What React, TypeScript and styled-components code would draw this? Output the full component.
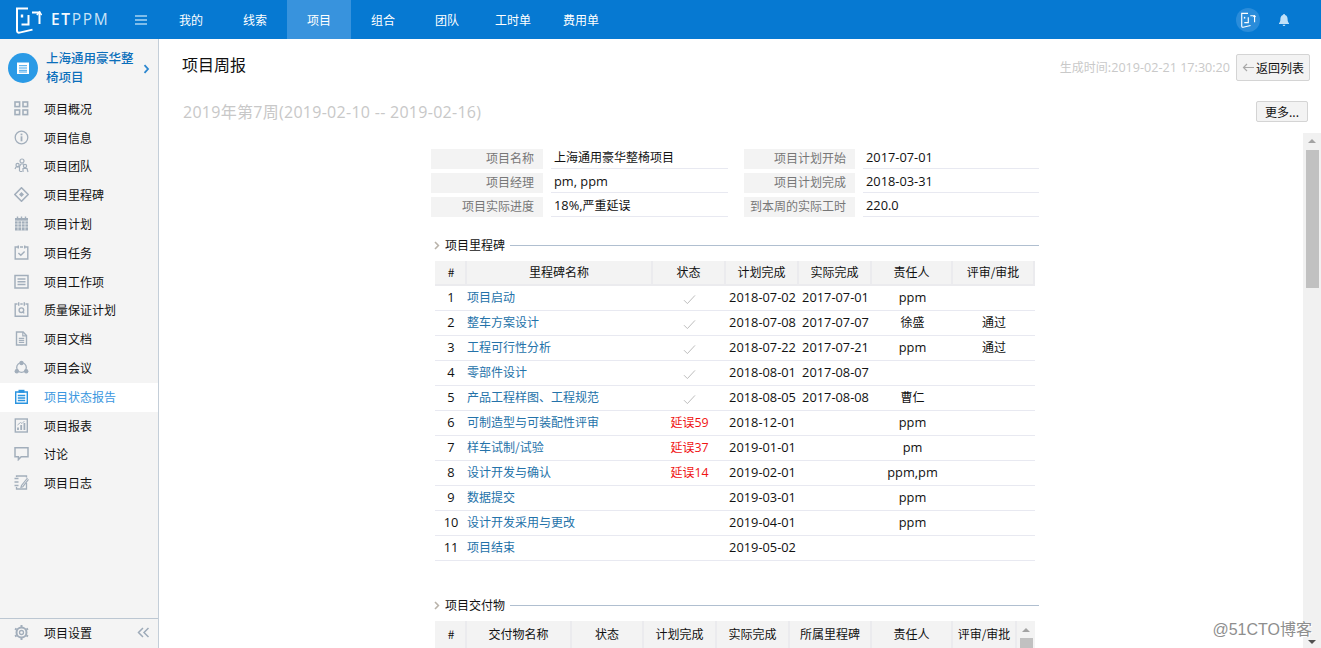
import React from "react";
import styled, { createGlobalStyle } from "styled-components";

const CJK = `"Noto Sans CJK SC", "Open Sans", sans-serif`;
const LATIN = `"Open Sans", "Noto Sans CJK SC", sans-serif`;

const Global = createGlobalStyle`
  html, body { margin: 0; padding: 0; height: 100%; overflow: hidden; background: #fff; }
  body { font-family: ${CJK}; font-size: 12px; color: #111; }
  #root { height: 100%; }
  * { box-sizing: border-box; }
`;

const Page = styled.div`
  position: relative;
  display: flex;
  flex-direction: column;
  height: 648px;
  width: 1321px;
  overflow: hidden;
`;
const TopBar = styled.header`
  display: flex;
  align-items: stretch;
  height: 39px;
  flex: none;
  background: #0679d2;
  color: #fff;
`;
const Brand = styled.div`
  display: flex;
  align-items: center;
  width: 159px;
  padding-left: 14px;
  flex: none;
`;
const BrandName = styled.span`
  margin-left: 9px;
  font: 400 15.5px/1 ${LATIN};
  letter-spacing: 1.7px;
  color: #c9e3f7;
  b { font-weight: 600; color: #f2f9fe; }
`;
const Burger = styled.span`
  margin-left: 25px;
  display: flex;
  flex-direction: column;
  gap: 2px;
  i { display: block; width: 12px; height: 2px; background: #7fbdea; }
`;
const Tab = styled.a<{ $active?: boolean }>`
  display: flex;
  align-items: center;
  justify-content: center;
  min-width: 64px;
  padding: 0 16px;
  font-size: 12px;
  color: #fff;
  background: ${(p) => (p.$active ? "#3893dd" : "transparent")};
`;
const TopRight = styled.div`
  margin-left: auto;
  display: flex;
  align-items: center;
  gap: 19px;
  padding-right: 32px;
`;
const Avatar = styled.span`
  width: 24px;
  height: 24px;
  border-radius: 50%;
  background: #2a8cda;
  display: flex;
  align-items: center;
  justify-content: center;
`;
const Body = styled.div`
  display: flex;
  flex: 1;
  min-height: 0;
`;
const Side = styled.aside`
  width: 159px;
  flex: none;
  background: #f4f4f4;
  border-right: 1px solid #c4ced8;
  display: flex;
  flex-direction: column;
`;
const ProjectHead = styled.div`
  display: flex;
  align-items: center;
  height: 55px;
  padding: 3px 0 0 8px;
`;
const ProjectDot = styled.span`
  width: 30px;
  height: 30px;
  flex: none;
  border-radius: 50%;
  background: #2a9ae6;
  display: flex;
  align-items: center;
  justify-content: center;
`;
const ProjectName = styled.div`
  width: 88px;
  margin: -2px 9px 0 8px;
  font-size: 12.5px;
  line-height: 19px;
  font-weight: 500;
  color: #0b6fbb;
`;
const ProjectChevron = styled.svg`
  margin-top: 2px;
`;
const SideList = styled.nav`
  display: flex;
  flex-direction: column;
  margin-top: 1px;
`;
const SideItem = styled.a<{ $active?: boolean }>`
  display: flex;
  align-items: center;
  height: 28.8px;
  padding: 0 0 2px 14px;
  gap: 15px;
  color: ${(p) => (p.$active ? "#3a97e0" : "#111")};
  background: ${(p) => (p.$active ? "#fff" : "transparent")};
  svg { flex: none; }
`;
const SideFoot = styled.div`
  margin-top: auto;
  height: 30px;
  border-top: 1px solid #bcc7d2;
  display: flex;
  align-items: center;
  padding: 0 0 2px 14px;
  gap: 15px;
  span { flex: 1; }
  svg:last-child { margin-right: 8px; }
`;
const Main = styled.main`
  flex: 1;
  min-width: 0;
  display: flex;
  flex-direction: column;
`;
const HeadRow = styled.div`
  display: flex;
  align-items: flex-start;
  height: 56px;
  flex: none;
  padding: 15px 11px 0 23px;
`;
const Title = styled.h1`
  margin: -1px 0 0;
  font-size: 16px;
  line-height: 22px;
  font-weight: 400;
  flex: 1;
`;
const Generated = styled.span`
  margin: 4px 6px 0 0;
  font-size: 12px;
  color: #c9c9c9;
  span { font-family: ${LATIN}; font-size: 12.6px; }
`;
const Btn = styled.button`
  display: inline-flex;
  align-items: center;
  justify-content: center;
  border: 1px solid #d4d4d4;
  border-radius: 2px;
  background: #f3f3f3;
  color: #111;
  font: 12px ${CJK};
  padding: 0;
`;
const BackBtn = styled(Btn)`
  width: 74px;
  height: 27px;
  gap: 1px;
`;
const MoreBtn = styled(Btn)`
  width: 52px;
  height: 21px;
`;
const WeekRow = styled.div`
  display: flex;
  align-items: flex-start;
  justify-content: space-between;
  height: 38px;
  flex: none;
  padding: 6px 13px 0 24px;
`;
const Week = styled.div`
  font: 16px/22px "Open Sans", ${CJK};
  letter-spacing: 0.28px;
  color: #c8c8c8;
`;
const Panel = styled.div`
  flex: 1;
  min-height: 0;
  display: flex;
`;
const Scroll = styled.div`
  flex: 1;
  min-width: 0;
  overflow: hidden;
  padding: 16px 0 0 272px;
`;
const Bar = styled.div<{ $w: number; $bg: string }>`
  width: ${(p) => p.$w}px;
  flex: none;
  background: ${(p) => p.$bg};
  display: flex;
  flex-direction: column;
  align-items: center;
  position: relative;
`;
const Arrow = styled.i<{ $h: number }>`
  display: block;
  flex: none;
  width: 0;
  height: 0;
  margin-top: ${(p) => p.$h}px;
  border: 4px solid transparent;
  border-top: 0;
  border-bottom: 4px solid #a3a3a3;
`;
const Thumb = styled.div<{ $top: number; $h: number }>`
  width: 13px;
  height: ${(p) => p.$h}px;
  margin-top: ${(p) => p.$top}px;
  background: #c1c1c1;
  flex: none;
`;
const ArrowDown = styled.i`
  position: absolute;
  bottom: 4px;
  width: 0;
  height: 0;
  border: 4px solid transparent;
  border-bottom: 0;
  border-top: 4px solid #505050;
`;
const Content = styled.div`
  width: 608px;
`;
const InfoGrid = styled.div`
  display: grid;
  grid-template-columns: 112px 185px 313px;
  width: 608px;
  row-gap: 4px;
`;
const InfoRow = styled.div`
  display: contents;
`;
const Label = styled.div<{ $w?: number }>`
  height: 20px;
  background: #f3f3f3;
  width: ${(p) => p.$w ?? 112}px;
  color: #777;
  text-align: right;
  padding-right: 9px;
  line-height: 18px;
`;
const Value = styled.div<{ $w: number }>`
  height: 20px;
  width: ${(p) => p.$w}px;
  margin-left: 8px;
  padding-left: 3px;
  border-bottom: 1px solid #e8e9f1;
  line-height: 15px;
  color: #111;
  white-space: nowrap;
`;
const Pair = styled.div`
  display: flex;
  margin-left: 16px;
`;
const Num = styled.span`
  font-family: ${LATIN};
  font-size: 12.8px;
`;
const SectionHead = styled.div<{ $mt: number }>`
  display: flex;
  align-items: center;
  margin-top: ${(p) => p.$mt}px;
  height: 16px;
  padding-left: 3px;
  svg { flex: none; }
`;
const SectionName = styled.span`
  margin: 0 5px 0 5px;
  padding-bottom: 2px;
  white-space: nowrap;
`;
const SectionLine = styled.i`
  flex: 1;
  height: 1px;
  background: #b0bfd0;
`;
const TableWrap = styled.div`
  margin: 8px 0 0 4px;
  display: flex;
  align-items: stretch;
  width: 600px;
`;
const Grid = styled.table<{ $w: number }>`
  table-layout: fixed;
  border-collapse: separate;
  border-spacing: 0;
  width: ${(p) => p.$w}px;
  flex: none;
`;
const Th = styled.th`
  height: 25px;
  padding: 0 0 2px;
  font-weight: 400;
  font-size: 12px;
  background: #f3f3f3;
  border-right: 2px solid #ebebee;
  border-bottom: 2px solid #ebebee;
  text-align: center;
  color: #111;
  &:first-child { padding-left: 2px; }
`;
const Td = styled.td<{ $left?: boolean; $latin?: boolean }>`
  height: 25px;
  padding: 0 0 ${(p) => (p.$latin ? 3 : 4)}px;
  border-bottom: 1px solid #e8e9f1;
  white-space: nowrap;
  text-align: ${(p) => (p.$left ? "left" : "center")};
  font-family: ${(p) => (p.$latin ? LATIN : CJK)};
  font-size: ${(p) => (p.$latin ? "12.8px" : "12px")};
  color: #111;
`;
const NameLink = styled.a`
  color: #2472a9;
`;
const Late = styled.span`
  display: inline-block;
  margin-top: 2px;
  color: #f01414;
  span { font-family: ${LATIN}; font-size: 12.4px; }
`;
const CheckMark = styled.svg`
  vertical-align: middle;
  margin-top: 4px;
`;
const Watermark = styled.div`
  position: absolute;
  right: 9px;
  bottom: 8px;
  font: 16px/20px "Liberation Sans", ${CJK};
  color: #8e8e8e;
  text-shadow: 0 0 1px #fff, 1px 1px 0 #fff;
`;

type IconProps = { c?: string };
const S = ({ children, w = 15 }: { children: React.ReactNode; w?: number }) => (
  <svg width={w} height={w} viewBox="0 0 15 15" fill="none">{children}</svg>
);
const G = "#a2aebb";

const icons: Record<string, (p: IconProps) => React.ReactElement> = {
  overview: ({ c = G }) => (
    <S><g stroke={c} strokeWidth="1.6"><rect x="1" y="1" width="4.6" height="4.6" /><rect x="9" y="1" width="4.6" height="4.6" /><rect x="1" y="9" width="4.6" height="4.6" /><rect x="9" y="9" width="4.6" height="4.6" /></g></S>
  ),
  info: ({ c = G }) => (
    <S><circle cx="7.5" cy="7.5" r="6.3" stroke={c} strokeWidth="1.3" /><rect x="6.6" y="6.3" width="1.8" height="5" fill={c} /><rect x="6.6" y="3.6" width="1.8" height="1.7" fill={c} /></S>
  ),
  team: ({ c = G }) => (
    <S><g stroke={c} strokeWidth="1.2"><circle cx="8" cy="3" r="2" /><circle cx="3.6" cy="7" r="1.6" /><circle cx="11" cy="8" r="1.6" /><path d="M5.5 13V8.5L7 6h2.5l.8 1M1 11l1-2h3M9 14v-3.5h4l1 3.5M5.5 13.5H8" /></g></S>
  ),
  milestone: ({ c = G }) => (
    <S><path d="M7.5.8 14.2 7.5 7.5 14.2.8 7.5Z" stroke={c} strokeWidth="1.6" /><path d="M7.5 5 10 7.5 7.5 10 5 7.5Z" fill={c} /></S>
  ),
  plan: ({ c = G }) => (
    <S><path d="M1 2h13v12.5H1Z" fill={c} /><path d="M3.5.5v3M7.5.5v3M11.5.5v3" stroke={c} strokeWidth="1.4" /><path d="M1 5h13M4 5v9.5M7.5 5v9.5M11 5v9.5M1 8h13M1 11h13" stroke="#f4f4f4" strokeWidth=".7" /></S>
  ),
  task: ({ c = G }) => (
    <S><path d="M4 2H1.2v12h12.6V2H11M6 2h3" stroke={c} strokeWidth="1.4" /><path d="M4.3.5v3M10.7.5v3" stroke={c} strokeWidth="1.4" /><path d="m4.4 8 2.4 2.3 3.800-3.800" stroke={c} strokeWidth="1.4" /></S>
  ),
  work: ({ c = G }) => (
    <S><rect x="1" y="1.5" width="13" height="12.5" stroke={c} strokeWidth="1.5" /><path d="M3.5 5h8M3.5 7.700h8M3.5 10.5h8" stroke={c} strokeWidth="1.4" /></S>
  ),
  quality: ({ c = G }) => (
    <S><path d="M3.5 2H1.2v12.3h12.6V2h-2.3M6.3 2h2.4" stroke={c} strokeWidth="1.4" /><path d="M4.700.3v3.400M10.300.3v3.400" stroke={c} strokeWidth="1.4" /><circle cx="7.4" cy="8.2" r="2.3" stroke={c} strokeWidth="1.4" /><path d="m8.600 9.600 1.600 1.800" stroke={c} strokeWidth="1.4" /></S>
  ),
  doc: ({ c = G }) => (
    <S><path d="M2.5 1h6.600L12.500 4.500V14h-10Z" stroke={c} strokeWidth="1.4" /><path d="M8.800 1v3.800h3.700M4.800 7.300h5.400M4.800 9.300h5.400M4.800 11.300h5.400" stroke={c} strokeWidth="1.2" /></S>
  ),
  meeting: ({ c = G }) => (
    <S><circle cx="7.5" cy="7.5" r="4.8" stroke={c} strokeWidth="1.3" /><circle cx="7.5" cy="3" r="2.2" fill={c} /><circle cx="2.8" cy="11.3" r="2.2" fill={c} /><circle cx="12.2" cy="11.3" r="2.2" fill={c} /></S>
  ),
  status: ({ c = "#2a94e0" }) => (
    <S><path d="M1.700 3h11.600v11.300H1.700Z" stroke={c} strokeWidth="1.4" fill="#fff" /><rect x="4.500" y=".8" width="6" height="3" fill={c} /><path d="M3.800 6.500h7.400M3.800 9h7.400M3.800 11.500h7.400" stroke={c} strokeWidth="1.3" /></S>
  ),
  report: ({ c = G }) => (
    <S><rect x="1.300" y="1" width="12" height="13" stroke={c} strokeWidth="1.4" /><path d="M4 12V9.500M7.200 12V7M10.400 12V5" stroke={c} strokeWidth="1.800" /><path d="m3.500 7 3-2.500 1.500 1 2.500-2.500" stroke={c} strokeWidth=".9" /></S>
  ),
  talk: ({ c = G }) => (
    <S><path d="M1 1.800h13v9H7.200l-2.800 2.800v-2.800H1Z" stroke={c} strokeWidth="1.5" /></S>
  ),
  log: ({ c = G }) => (
    <S><path d="M.5 3.500h4M.5 7h4M.5 10.500h4" stroke={c} strokeWidth="1.300" /><path d="M2.500 2V1h10v1.500M2.500 12v2h10V8" stroke={c} strokeWidth="1.300" /><path d="M13.500 3 7.500 10.500l-.5 1.800 1.800-.6L14.500 4.300" stroke={c} strokeWidth="1.200" /></S>
  ),
};

const Logo = ({ size = 28, color = "#fff" }: { size?: number; color?: string }) => (
  <svg width={size} height={size} viewBox="0 0 28 28" fill="none" stroke={color} strokeWidth="2">
    <path d="M14 2.500H3V24.500c0 1.600.9 2.400 2.500 2.100l13-3" />
    <path d="M18 6.500h7.500V18" />
    <path d="M22.800 9 25.500 6l2.200 3" strokeWidth="1.500" />
    <path d="M8 8.500v3" strokeWidth="2.400" />
    <path d="M14.500 9V18.500H7.500" />
  </svg>
);

const tabs = ["我的", "线索", "项目", "组合", "团队", "工时单", "费用单"];
const sideItems: [string, string][] = [
  ["overview", "项目概况"], ["info", "项目信息"], ["team", "项目团队"], ["milestone", "项目里程碑"],
  ["plan", "项目计划"], ["task", "项目任务"], ["work", "项目工作项"], ["quality", "质量保证计划"],
  ["doc", "项目文档"], ["meeting", "项目会议"], ["status", "项目状态报告"], ["report", "项目报表"],
  ["talk", "讨论"], ["log", "项目日志"],
];

type Row = [string, "ok" | number | "", string, string, string, string];
const rows: Row[] = [
  ["项目启动", "ok", "2018-07-02", "2017-07-01", "ppm", ""],
  ["整车方案设计", "ok", "2018-07-08", "2017-07-07", "徐盛", "通过"],
  ["工程可行性分析", "ok", "2018-07-22", "2017-07-21", "ppm", "通过"],
  ["零部件设计", "ok", "2018-08-01", "2017-08-07", "", ""],
  ["产品工程样图、工程规范", "ok", "2018-08-05", "2017-08-08", "曹仁", ""],
  ["可制造型与可装配性评审", 59, "2018-12-01", "", "ppm", ""],
  ["样车试制/试验", 37, "2019-01-01", "", "pm", ""],
  ["设计开发与确认", 14, "2019-02-01", "", "ppm,pm", ""],
  ["数据提交", "", "2019-03-01", "", "ppm", ""],
  ["设计开发采用与更改", "", "2019-04-01", "", "ppm", ""],
  ["项目结束", "", "2019-05-02", "", "", ""],
];

const Check = () => (
  <CheckMark width="13" height="11" viewBox="0 0 13 11" fill="none">
    <path d="M1 6.200 4.400 9.600 12 1.400" stroke="#bdbdbd" strokeWidth="1" />
  </CheckMark>
);
const Chevron = () => (
  <svg width="6" height="9" viewBox="0 0 6 9" fill="none">
    <path d="M1 1l3.400 3.500L1 8" stroke="#b9b3aa" strokeWidth="1.600" />
  </svg>
);

const isLatin = (s: string) => /^[\x00-\x7f]*$/.test(s);

export default function App() {
  const Info = [
    ["项目名称", <>上海通用豪华整椅项目</>, "项目计划开始", <Num>2017-07-01</Num>],
    ["项目经理", <Num>pm, ppm</Num>, "项目计划完成", <Num>2018-03-31</Num>],
    ["项目实际进度", <><Num>18%,</Num>严重延误</>, "到本周的实际工时", <Num>220.0</Num>],
  ] as const;
  return (
    <Page>
      <Global />
      <TopBar>
        <Brand>
          <Logo />
          <BrandName><b>ET</b>PPM</BrandName>
          <Burger><i /><i /><i /></Burger>
        </Brand>
        {tabs.map((t) => <Tab key={t} $active={t === "项目"}>{t}</Tab>)}
        <TopRight>
          <Avatar><Logo size={16} /></Avatar>
          <svg width="10" height="12" viewBox="0 0 10 12" fill="#bfe0f8">
            <path d="M5 0c.600 0 1 .400 1 .900C7.800 1.400 8.600 3 8.600 5c0 2.300.500 3.300 1.400 4.200V10H0v-.800C.900 8.300 1.400 7.300 1.400 5 1.400 3 2.200 1.400 4 .900 4 .400 4.400 0 5 0ZM3.600 10.700h2.800C6.300 11.500 5.700 12 5 12s-1.300-.500-1.400-1.300Z" />
          </svg>
        </TopRight>
      </TopBar>
      <Body>
        <Side>
          <ProjectHead>
            <ProjectDot>
              <svg width="14" height="14" viewBox="0 0 14 14">
                <path d="M1 1.500h12V13H1Z" fill="#fff" />
                <path d="M3 4.700h8M3 7h8M3 9.300h8M3 11h8" stroke="#2a9ae6" strokeWidth=".9" />
              </svg>
            </ProjectDot>
            <ProjectName>上海通用豪华整椅项目</ProjectName>
            <ProjectChevron width="7" height="10" viewBox="0 0 7 10" fill="none">
              <path d="M1.500 1.200 5 5 1.500 8.800" stroke="#2a86cf" strokeWidth="1.800" />
            </ProjectChevron>
          </ProjectHead>
          <SideList>
            {sideItems.map(([k, t]) => {
              const Ic = icons[k];
              return <SideItem key={t} $active={k === "status"}><Ic />{t}</SideItem>;
            })}
          </SideList>
          <SideFoot>
            <svg width="15" height="15" viewBox="0 0 15 15" fill="none">
              <circle cx="7.500" cy="7.500" r="5" stroke={G} strokeWidth="2" />
              <circle cx="7.500" cy="7.500" r="2" stroke={G} strokeWidth="1.300" />
              <path d="M7.500 0v2M7.500 13v2M1 3.700l1.700 1M12.300 10.300l1.700 1M1 11.300l1.700-1M12.300 4.700l1.700-1" stroke={G} strokeWidth="2" />
            </svg>
            <span>项目设置</span>
            <svg width="13" height="11" viewBox="0 0 13 11" fill="none">
              <path d="M6 1 1.500 5.500 6 10M11.500 1 7 5.500l4.500 4.500" stroke="#9eabb9" strokeWidth="1.500" />
            </svg>
          </SideFoot>
        </Side>
        <Main>
          <HeadRow>
            <Title>项目周报</Title>
            <Generated>生成时间:<span>2019-02-21 17:30:20</span></Generated>
            <BackBtn>
              <svg width="13" height="9" viewBox="0 0 13 9" fill="none">
                <path d="M12 4.500H2M5 1 1.500 4.500 5 8" stroke="#a9a9a9" strokeWidth="1.200" />
              </svg>
              返回列表
            </BackBtn>
          </HeadRow>
          <WeekRow>
            <Week>2019年第7周(2019-02-10 -- 2019-02-16)</Week>
            <MoreBtn>更多...</MoreBtn>
          </WeekRow>
          <Panel>
            <Scroll>
              <Content>
                <InfoGrid>
                  {Info.map(([a, b, c, d]) => (
                    <InfoRow key={a}>
                      <Label>{a}</Label>
                      <Value $w={177}>{b}</Value>
                      <Pair>
                        <Label $w={111}>{c}</Label>
                        <Value $w={176}>{d}</Value>
                      </Pair>
                    </InfoRow>
                  ))}
                </InfoGrid>
                <SectionHead $mt={20}>
                  <Chevron />
                  <SectionName>项目里程碑</SectionName>
                  <SectionLine />
                </SectionHead>
                <TableWrap>
                  <Grid $w={600}>
                    <colgroup>
                      {[32, 186, 73, 73, 73, 81, 82].map((w, i) => <col key={i} width={w} />)}
                    </colgroup>
                    <thead>
                      <tr>
                        {["#", "里程碑名称", "状态", "计划完成", "实际完成", "责任人", "评审/审批"].map((h) => <Th key={h}>{h}</Th>)}
                      </tr>
                    </thead>
                    <tbody>
                      {rows.map((r, i) => (
                        <tr key={r[0]}>
                          <Td $latin>{i + 1}</Td>
                          <Td $left><NameLink>{r[0]}</NameLink></Td>
                          <Td>
                            {r[1] === "ok" ? <Check /> : r[1] === "" ? null : <Late>延误<span>{r[1]}</span></Late>}
                          </Td>
                          <Td $latin>{r[2]}</Td>
                          <Td $latin>{r[3]}</Td>
                          <Td $latin={isLatin(r[4])}>{r[4]}</Td>
                          <Td>{r[5]}</Td>
                        </tr>
                      ))}
                    </tbody>
                  </Grid>
                </TableWrap>
                <SectionHead $mt={36}>
                  <Chevron />
                  <SectionName>项目交付物</SectionName>
                  <SectionLine />
                </SectionHead>
                <TableWrap>
                  <Grid $w={582}>
                    <colgroup>
                      {[32, 105, 72, 73, 73, 82, 81, 64].map((w, i) => <col key={i} width={w} />)}
                    </colgroup>
                    <thead>
                      <tr>
                        {["#", "交付物名称", "状态", "计划完成", "实际完成", "所属里程碑", "责任人", "评审/审批"].map((h) => <Th key={h}>{h}</Th>)}
                      </tr>
                    </thead>
                  </Grid>
                  <Bar $w={18} $bg="#f3f3f3">
                    <Arrow $h={7} />
                    <Thumb $top={6} $h={12} />
                  </Bar>
                </TableWrap>
              </Content>
            </Scroll>
            <Bar $w={18} $bg="#f1f1f1">
              <Arrow $h={6} />
              <Thumb $top={7} $h={138} />
              <ArrowDown />
            </Bar>
          </Panel>
        </Main>
      </Body>
      <Watermark>@51CTO博客</Watermark>
    </Page>
  );
}
